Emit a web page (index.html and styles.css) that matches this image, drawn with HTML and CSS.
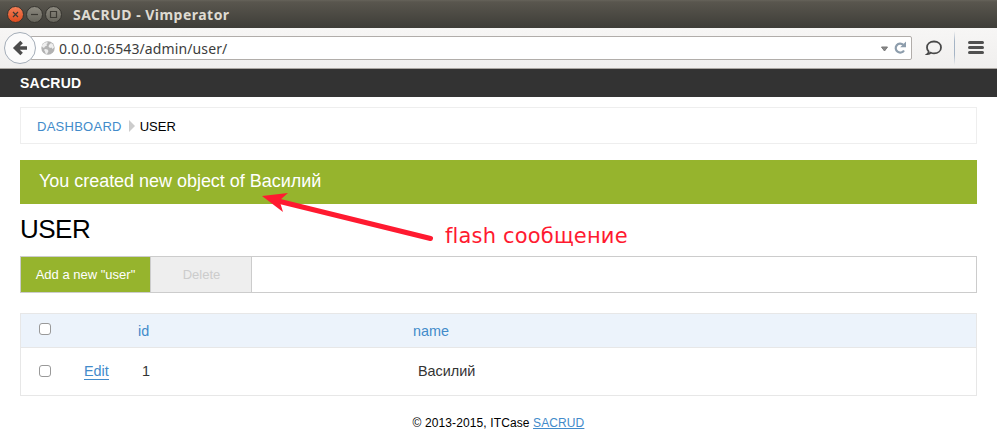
FILE: index.html
```html
<!DOCTYPE html>
<html lang="en">
<head>
<meta charset="utf-8">
<title>SACRUD</title>
<link rel="stylesheet" href="styles.css">
</head>
<body>
<div class="titlebar">
  <svg class="window-buttons" width="58" height="28" viewBox="0 0 58 28">
    <defs>
      <linearGradient id="close" x1="0" y1="0" x2="0" y2="1"><stop offset="0" stop-color="#f58058"/><stop offset="1" stop-color="#dd4a1d"/></linearGradient>
      <linearGradient id="plain" x1="0" y1="0" x2="0" y2="1"><stop offset="0" stop-color="#8d8a80"/><stop offset="1" stop-color="#66645b"/></linearGradient>
    </defs>
    <g stroke="#35332e" stroke-width="1">
      <circle cx="10.5" cy="14.5" r="8" fill="url(#close)"/>
      <circle cx="29.5" cy="14.5" r="8" fill="url(#plain)"/>
      <circle cx="48.5" cy="14.5" r="8" fill="url(#plain)"/>
    </g>
    <g fill="none" stroke="#3c3a34" stroke-width="1.2">
      <path d="M8 12l5 5M13 12l-5 5"/>
      <path d="M26 14.5h7"/>
      <path d="M45.5 11.5h6v6h-6z"/>
    </g>
  </svg>
  <span class="window-title">SACRUD - Vimperator</span>
</div>
<div class="navbar">
  <svg class="back" width="34" height="34" viewBox="0 0 34 34">
    <circle cx="17" cy="17" r="15.5" fill="#fbfbfb" stroke="#a4adb8"/>
    <path d="M24 17H13M18.600 11L12.500 17l6.100 6" fill="none" stroke="#4b4b4b" stroke-width="3.600"/>
  </svg>
  <div class="urlbar">
    <svg class="globe" width="14" height="14" viewBox="0 0 14 14">
      <circle cx="7" cy="7" r="6.700" fill="#b2b2b2"/>
      <path d="M1 4.500l2-2.500 3-1 1 1-1.500 1 .5 1.500-2 1L3 7 1.200 6zM8 4l2-2 2 1.500 1 3-1.500 1.500-1-1.500L9 7 7.500 5.500zM4 8l2.500.5L7.500 10 6 13l-1.500-.5L4 10.500 3 9z" fill="#eee"/>
    </svg>
    <span class="url">0.0.0.0:6543/admin/user/</span>
    <svg class="url-actions" width="28" height="16" viewBox="0 0 28 16">
      <path d="M1.500 7h6L4.500 11z" fill="#8a8a8a" stroke="#777"/>
      <path d="M23.300 4.800A4.500 4.500 0 1 0 24 10.500" fill="none" stroke="#8d9dac" stroke-width="2.200"/>
      <path d="M26 1.500v5.800h-5.800z" fill="#8d9dac"/>
    </svg>
  </div>
  <svg class="chat" width="18" height="18" viewBox="0 0 18 18">
    <path d="M9 2.500c4 0 7 2.400 7 5.900s-3 5.900-7 5.900c-1.200 0-2.200-.2-3.100-.6-.8.9-2 1.300-3.400 1.300 1-.7 1.200-1.700 1.100-2.600C2.600 11.400 2 10 2 8.400c0-3.500 3-5.900 7-5.900z" fill="none" stroke="#484848" stroke-width="1.800"/>
  </svg>
  <span class="divider"></span>
  <span class="menu"><i></i><i></i><i></i></span>
</div>
<header class="app-header">SACRUD</header>
<main>
  <nav class="breadcrumb"><a>DASHBOARD</a><i class="chevron"></i><span>USER</span></nav>
  <div class="flash">You created new object of Василий
    <div class="annotation">
      <svg width="176" height="52" viewBox="0 0 176 52">
        <path d="M168.500 46.500L18 9.500" stroke="#ff1a30" stroke-width="5" stroke-linecap="round"/>
        <path d="M0 4L26 1 17.500 8.500 21 20z" fill="#ff1a30"/>
      </svg>
      <span>flash сообщение</span>
    </div>
  </div>
  <h1>USER</h1>
  <div class="actions"><button class="add">Add a new "user"</button><button class="delete" disabled>Delete</button></div>
  <div class="table">
    <div class="row head"><span><i class="checkbox"></i></span><span></span><a>id</a><a>name</a></div>
    <div class="row"><span><i class="checkbox"></i></span><span><a class="edit">Edit</a></span><span class="value">1</span><span class="value name">Василий</span></div>
  </div>
</main>
<footer>© 2013-2015, ITCase <a>SACRUD</a></footer>
</body>
</html>
```
FILE: styles.css
```css
* { box-sizing: border-box; }
body {
  margin: 0;
  height: 448px;
  overflow: hidden;
  background: #fff;
  color: #000;
  font-family: "Liberation Sans", Arial, sans-serif;
}
a { color: #428bca; }
svg { display: block; flex: none; }

.titlebar {
  display: flex;
  align-items: center;
  height: 28px;
  padding-left: 5px;
  background: linear-gradient(#66635a 0, #59564e 2px, #3e3d38 28px);
  font: bold 14px "Noto Sans", sans-serif;
  color: #dfdbd2;
}
.window-title { margin-left: 10px; letter-spacing: .48px; white-space: nowrap; }

.navbar {
  display: flex;
  align-items: center;
  height: 41px;
  padding: 0 12px 1px 3px;
  background: linear-gradient(#f7f6f5, #f0efee);
  border-bottom: 1px solid #aaa6a2;
}
.back { position: relative; z-index: 1; }
.urlbar {
  display: flex;
  align-items: center;
  width: 882px;
  height: 24px;
  margin-left: -7px;
  padding: 0 3px 0 10px;
  background: #fff;
  border: 1px solid #b1adaa;
  border-radius: 2px;
}
.url {
  flex: 1;
  margin-left: 4px;
  padding-top: 1px;
  font: 14px "Noto Sans", sans-serif;
  letter-spacing: .12px;
  color: #3c3c3c;
}
.chat { margin-left: 13px; }
.divider {
  width: 1px;
  height: 34px;
  margin-left: 11px;
  background: linear-gradient(transparent, #a5b4c5 30%, #a5b4c5 70%, transparent);
}
.menu { display: grid; gap: 2px; margin-left: 13px; }
.menu i { width: 16px; height: 3px; border-radius: 1.500px; background: #505050; }

.app-header {
  height: 28px;
  padding-left: 20px;
  background: #333;
  color: #fff;
  font-size: 14px;
  font-weight: bold;
  letter-spacing: .25px;
  line-height: 29px;
}
main { padding: 10px 20px 0; }
.breadcrumb {
  display: flex;
  align-items: center;
  height: 37px;
  padding: 2px 16px 0;
  border: 1px solid #eee;
  font-size: 13px;
}
.breadcrumb a { letter-spacing: .26px; }
.chevron {
  margin: -2px 5px 0 7px;
  border: 6px solid transparent;
  border-left-color: #ccc;
  border-right: 0;
}
.flash {
  position: relative;
  height: 44px;
  margin-top: 16px;
  padding-left: 19px;
  background: #96b42d;
  color: #fff;
  font-size: 18px;
  letter-spacing: -.03px;
  line-height: 42px;
}
.annotation {
  position: absolute;
  z-index: 1;
  top: 32px;
  left: 242px;
  display: flex;
  color: #ff1a30;
  font: 21px "DejaVu Sans", sans-serif;
  letter-spacing: .17px;
  white-space: nowrap;
}
.annotation span { margin: 32px 0 0 7px; font-variant-ligatures: common-ligatures; }
h1 { height: 52px; margin: 0; font-size: 26px; font-weight: normal; letter-spacing: -.5px; line-height: 51px; }
.actions { display: flex; height: 37px; border: 1px solid #ccc; }
.actions button {
  padding: 0;
  border: 0;
  border-right: 1px solid #ccc;
  font: 13px "Liberation Sans", sans-serif;
}
.actions .add { width: 130px; background: #96b42d; color: #fff; }
.actions .delete { width: 101px; padding-left: 1px; background: #eee; color: #ccc; }
.table { margin-top: 20px; border: 1px solid #e7e7e7; font-size: 14.400px; }
.row {
  display: grid;
  grid-template-columns: 63px 54px 275px 1fr;
  align-items: center;
  height: 47px;
  padding-bottom: 2px;
}
.row.head { height: 34px; padding: 0; background: #ecf3fb; border-bottom: 1px solid #e7e7e7; }
.head a { padding-top: 1px; }
.checkbox {
  display: block;
  width: 12px;
  height: 12px;
  margin-left: 18px;
  border: 1px solid #999;
  border-radius: 3px;
  background: #fff;
}
.head .checkbox { margin-top: -3px; }
.edit { border-bottom: 1px solid; }
.value { padding-left: 4px; color: #333; }
.name { padding-left: 5px; }
footer { margin-top: 20px; text-align: center; font-size: 12px; letter-spacing: .11px; line-height: 14px; }
footer a { text-decoration: underline; }
```
